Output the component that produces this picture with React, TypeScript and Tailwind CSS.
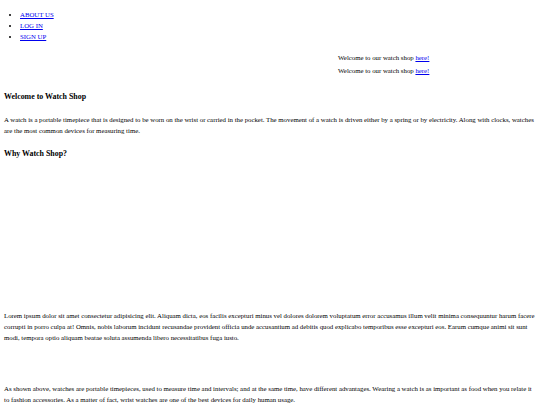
import { FC } from 'react';

const navLinks = ['ABOUT US', 'LOG IN', 'SIGN UP'];

const App: FC = () => {
    return (
        <div className="min-h-[405px] bg-white pl-[4px] pr-[2px] text-black text-[6.8px] leading-[11px] font-['Liberation_Serif',serif]">
            <ul className="list-disc pl-[16px] pt-[8.5px]">
                {navLinks.map((link) => (
                    <li key={link}>
                        <a href="#" className="text-[#0000ee] underline">{link}</a>
                    </li>
                ))}
            </ul>

            <div className="mt-[9px] pl-[334px] leading-[13px]">
                <p>Welcome to our watch shop <a href="#" className="text-[#0000ee] underline">here!</a></p>
                <p>Welcome to our watch shop <a href="#" className="text-[#0000ee] underline">here!</a></p>
            </div>

            <h1 className="mt-[14px] text-[7.9px] font-bold">Welcome to Watch Shop</h1>
            <p className="mt-[12px]">
                A watch is a portable timepiece that is designed to be worn on the wrist or carried in the pocket. The movement of a watch is driven either by a spring or by electricity. Along with clocks, watches are the most common devices for measuring time.
            </p>

            <h2 className="mt-[12px] text-[7.9px] font-bold">Why Watch Shop?</h2>

            {/* picture area (image not loaded) */}
            <div className="h-[151px]" />

            <p>
                Lorem ipsum dolor sit amet consectetur adipisicing elit. Aliquam dicta, eos facilis excepturi minus vel dolores dolorem voluptatum error accusamus illum velit minima consequuntur harum facere corrupti in porro culpa at! Omnis, nobis laborum incidunt recusandae provident officia unde accusantium ad debitis quod explicabo temporibus esse excepturi eos. Earum cumque animi sit sunt modi, tempora optio aliquam beatae soluta assumenda libero necessitatibus fuga iusto.
            </p>

            <p className="mt-[40px]">
                As shown above, watches are portable timepieces, used to measure time and intervals; and at the same time, have different advantages. Wearing a watch is as important as food when you relate it to fashion accessories. As a matter of fact, wrist watches are one of the best devices for daily human usage.
            </p>
        </div>
    );
};

export default App;
